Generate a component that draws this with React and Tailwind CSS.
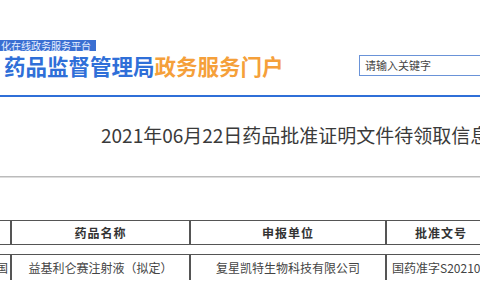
import React from "react";

const cjk = { fontFamily: '"Noto Sans CJK SC", "Noto Sans", sans-serif' };

export default function App() {
  return (
    <div className="w-[480px] h-[300px] overflow-hidden bg-white" style={cjk}>
      <div className="h-[40px]" />
      <div className="flex">
        <div className="h-[11px] w-[96px] bg-[#3a6fd2] text-[10px] leading-[11px] text-[#e8f0ff] whitespace-nowrap pl-[1px]">
          化在线政务服务平台
        </div>
      </div>
      <div className="flex items-center h-[23px] mt-[3px]">
        <div className="pl-[4px] w-[359px] shrink-0 text-[21.5px] leading-[23px] font-bold whitespace-nowrap">
          <span className="text-[#2f6fd8]">药品监督管理局</span>
          <span className="text-[#f5a03a]">政务服务门户</span>
        </div>
        <div className="h-[21px] w-[160px] shrink-0 border border-[#6a93d8] pl-[5px] flex items-center text-[11px] text-[#444] whitespace-nowrap">
          请输入关键字
        </div>
      </div>
      <div className="h-[18px]" />
      <div className="h-[2px] bg-[#2f6fd8]" />
      <div className="h-[25px]" />
      <div className="pl-[101px] text-[19px] leading-[26px] text-[#3a3a3a] whitespace-nowrap">
        2021年06月22日药品批准证明文件待领取信息
      </div>
      <div className="h-[28px]" />
      <div className="h-[2px] border-t border-[#bbb] border-b border-b-[#ddd]" />
      <div className="h-[42px]" />
      <div className="flex h-[25px] border-t border-b border-[#555] text-[12px] font-bold text-[#333] whitespace-nowrap">
        <div className="w-[12px] shrink-0 border-r-2 border-[#555]" />
        <div className="w-[179px] shrink-0 border-r-2 border-[#555] flex items-center justify-center tracking-[1px]">药品名称</div>
        <div className="w-[196px] shrink-0 border-r-2 border-[#555] flex items-center justify-center tracking-[1px]">申报单位</div>
        <div className="w-[108px] shrink-0 flex items-center justify-center tracking-[1px]">批准文号</div>
      </div>
      <div className="h-[9px]" />
      <div className="flex h-[26px] border-t border-[#555] text-[12px] text-[#444] whitespace-nowrap">
        <div className="w-[12px] shrink-0 border-r-2 border-[#555] flex items-center justify-end overflow-hidden pr-[2px]">国</div>
        <div className="w-[179px] shrink-0 border-r-2 border-[#555] flex items-center justify-center">益基利仑赛注射液（拟定）</div>
        <div className="w-[196px] shrink-0 border-r-2 border-[#555] flex items-center justify-center">复星凯特生物科技有限公司</div>
        <div className="w-[108px] shrink-0 flex items-center pl-[5px]">国药准字S20210001</div>
      </div>
    </div>
  );
}
